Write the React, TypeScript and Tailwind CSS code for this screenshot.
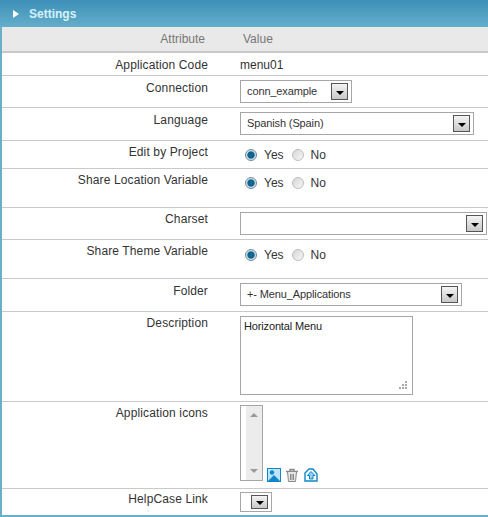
const font = { fontFamily: '"Liberation Sans", Arial, sans-serif' };

const Row = ({
  label,
  height,
  low,
  children,
}: {
  label: string;
  height: string;
  low?: boolean;
  children: React.ReactNode;
}) => (
  <div className={`flex border-b border-[#c9c9c9] ${height}`}>
    <div className={`w-[206px] shrink-0 text-right leading-[15px] tracking-[0.13px] text-[#333] ${low ? "pt-[5px]" : "pt-[4px]"}`}>
      {label}
    </div>
    <div className="flex-1 pl-[32px]">{children}</div>
  </div>
);

const Select = ({ text, width }: { text?: string; width: string }) => (
  <div className={`flex h-[23px] items-center justify-between border border-[#a6a6a6] bg-white pl-[6px] pr-[3px] text-[11px] tracking-[-0.12px] text-[#333] ${width}`}>
    <span>{text}</span>
    <div className="flex h-[17px] w-[17px] items-center justify-center border border-[#555] bg-gradient-to-b from-[#f4f4f4] to-[#c8c8c8]">
      <div className="mt-[2px] h-0 w-0 border-x-[4px] border-t-[4px] border-x-transparent border-t-black" />
    </div>
  </div>
);

const Radio = ({ on }: { on?: boolean }) => (
  <span
    className={`inline-block h-[12px] w-[12px] rounded-full border ${
      on
        ? "border-[#6f8c9c] bg-[radial-gradient(circle,#0a6f9f_0%,#0d5f88_45%,#c9dbe4_58%,#eef3f6_100%)]"
        : "border-[#bdbdbd] bg-gradient-to-br from-[#d6d6d6] to-[#f7f7f7]"
    }`}
  />
);

const YesNo = ({ pad }: { pad: string }) => (
  <div className={`flex items-center pl-[5px] text-[12px] leading-[14px] text-[#333] ${pad}`}>
    <Radio on />
    <span className="ml-[7px]">Yes</span>
    <span className="ml-[8px] flex"><Radio /></span>
    <span className="ml-[7px]">No</span>
  </div>
);

export default function App() {
  return (
    <div style={font} className="h-[517px] w-[488px] overflow-hidden bg-white text-[12px]">
      <div className="flex h-[27px] items-center bg-gradient-to-b from-[#3d8fb8] to-[#63aeca] pl-[13px]">
        <div className="h-0 w-0 border-y-[4px] border-l-[6px] border-y-transparent border-l-white" />
        <span className="ml-[10px] font-bold text-[#d6f1fb]">Settings</span>
      </div>
      <div className="h-[490px] border-l-2 border-[#6aaecb]">
        <div className="flex h-[26px] items-center border-b-2 border-[#c9c9c9] bg-[#e9e9e9] text-[#777]">
          <div className="w-[203px] text-right">Attribute</div>
          <div className="pl-[38px]">Value</div>
        </div>
        <Row label="Application Code" height="h-[23px]" low>
          <div className="pt-[5px] leading-[15px] text-[#333]">menu01</div>
        </Row>
        <Row label="Connection" height="h-[32px]" low>
          <div className="pt-[4px]"><Select text="conn_example" width="w-[112px]" /></div>
        </Row>
        <Row label="Language" height="h-[33px]" low>
          <div className="pt-[4px]"><Select text="Spanish (Spain)" width="w-[234px]" /></div>
        </Row>
        <Row label="Edit by Project" height="h-[28px]"><YesNo pad="pt-[7px]" /></Row>
        <Row label="Share Location Variable" height="h-[39px]"><YesNo pad="pt-[7px]" /></Row>
        <Row label="Charset" height="h-[32px]">
          <div className="pt-[4px]"><Select width="w-[247px]" /></div>
        </Row>
        <Row label="Share Theme Variable" height="h-[39px]"><YesNo pad="pt-[8px]" /></Row>
        <Row label="Folder" height="h-[33px]" low>
          <div className="pt-[4px]"><Select text="+- Menu_Applications" width="w-[222px]" /></div>
        </Row>
        <Row label="Description" height="h-[90px]">
          <div className="relative mt-[4px] h-[79px] w-[173px] border border-[#a6a6a6] px-[3px] py-[3px] text-[11px] leading-[13px] tracking-[-0.15px] text-[#222]">
            Horizontal Menu
            <svg className="absolute bottom-[4px] right-[4px]" width="10" height="10" viewBox="0 0 10 10" fill="#aaa">
              <rect x="7" y="1" width="2" height="2" />
              <rect x="4" y="4" width="2" height="2" />
              <rect x="7" y="4" width="2" height="2" />
              <rect x="1" y="7" width="2" height="2" />
              <rect x="4" y="7" width="2" height="2" />
              <rect x="7" y="7" width="2" height="2" />
            </svg>
          </div>
        </Row>
        <Row label="Application icons" height="h-[87px]">
          <div className="flex items-end pt-[3px]">
            <div className="flex h-[76px] w-[23px] justify-end border border-[#a6a6a6] bg-white">
              <div className="flex w-[16px] flex-col items-center justify-between bg-[#ececec] py-[7px]">
                <div className="h-0 w-0 border-x-[4px] border-b-[4px] border-x-transparent border-b-[#9a9a9a]" />
                <div className="h-0 w-0 border-x-[4px] border-t-[4px] border-x-transparent border-t-[#9a9a9a]" />
              </div>
            </div>
            <svg className="mb-[-1px] ml-[4px]" width="14" height="14" viewBox="0 0 14 14">
              <rect x="0.5" y="0.5" width="13" height="13" fill="#bfe4f6" stroke="#0f86c9" />
              <circle cx="5" cy="4.5" r="2.2" fill="#0f86c9" />
              <path d="M1 13 L7 7 L13 13 Z" fill="#0f86c9" />
            </svg>
            <svg className="mb-[-1px] ml-[4px]" width="14" height="14" viewBox="0 0 14 14" fill="none" stroke="#8a8a8a">
              <path d="M1 3.5 H13 M5 3.5 V1.5 H9 V3.5" strokeWidth="1.4" />
              <path d="M2.5 4 L3.5 13.5 H10.5 L11.5 4" fill="#e6e6e6" />
              <path d="M5.5 6 V12 M7 6 V12 M8.5 6 V12" />
            </svg>
            <svg className="mb-[-1px] ml-[5px]" width="14" height="14" viewBox="0 0 14 14" fill="#fff" stroke="#0f86c9" strokeWidth="1.4">
              <path d="M1 13 V5 L5 1 H9 L13 6 V13 Z" />
              <path d="M7 3.5 L3.5 7.5 H5.5 V11 H9 V7.5 H11 Z" fill="#8fd0f2" strokeWidth="1" />
            </svg>
          </div>
        </Row>
        <div className="flex h-[26px]">
          <div className="w-[206px] shrink-0 pt-[3px] text-right leading-[15px] tracking-[0.13px] text-[#333]">HelpCase Link</div>
          <div className="pl-[32px] pt-[3px]">
            <div className="flex h-[20px] w-[32px] items-center justify-end border border-[#a6a6a6] pr-[3px]">
              <div className="flex h-[14px] w-[17px] items-center justify-center border border-[#555] bg-gradient-to-b from-[#f4f4f4] to-[#c8c8c8]">
                <div className="mt-[2px] h-0 w-0 border-x-[4px] border-t-[4px] border-x-transparent border-t-black" />
              </div>
            </div>
          </div>
        </div>
        <div className="h-[2px] bg-[#6aaecb]" />
      </div>
    </div>
  );
}
